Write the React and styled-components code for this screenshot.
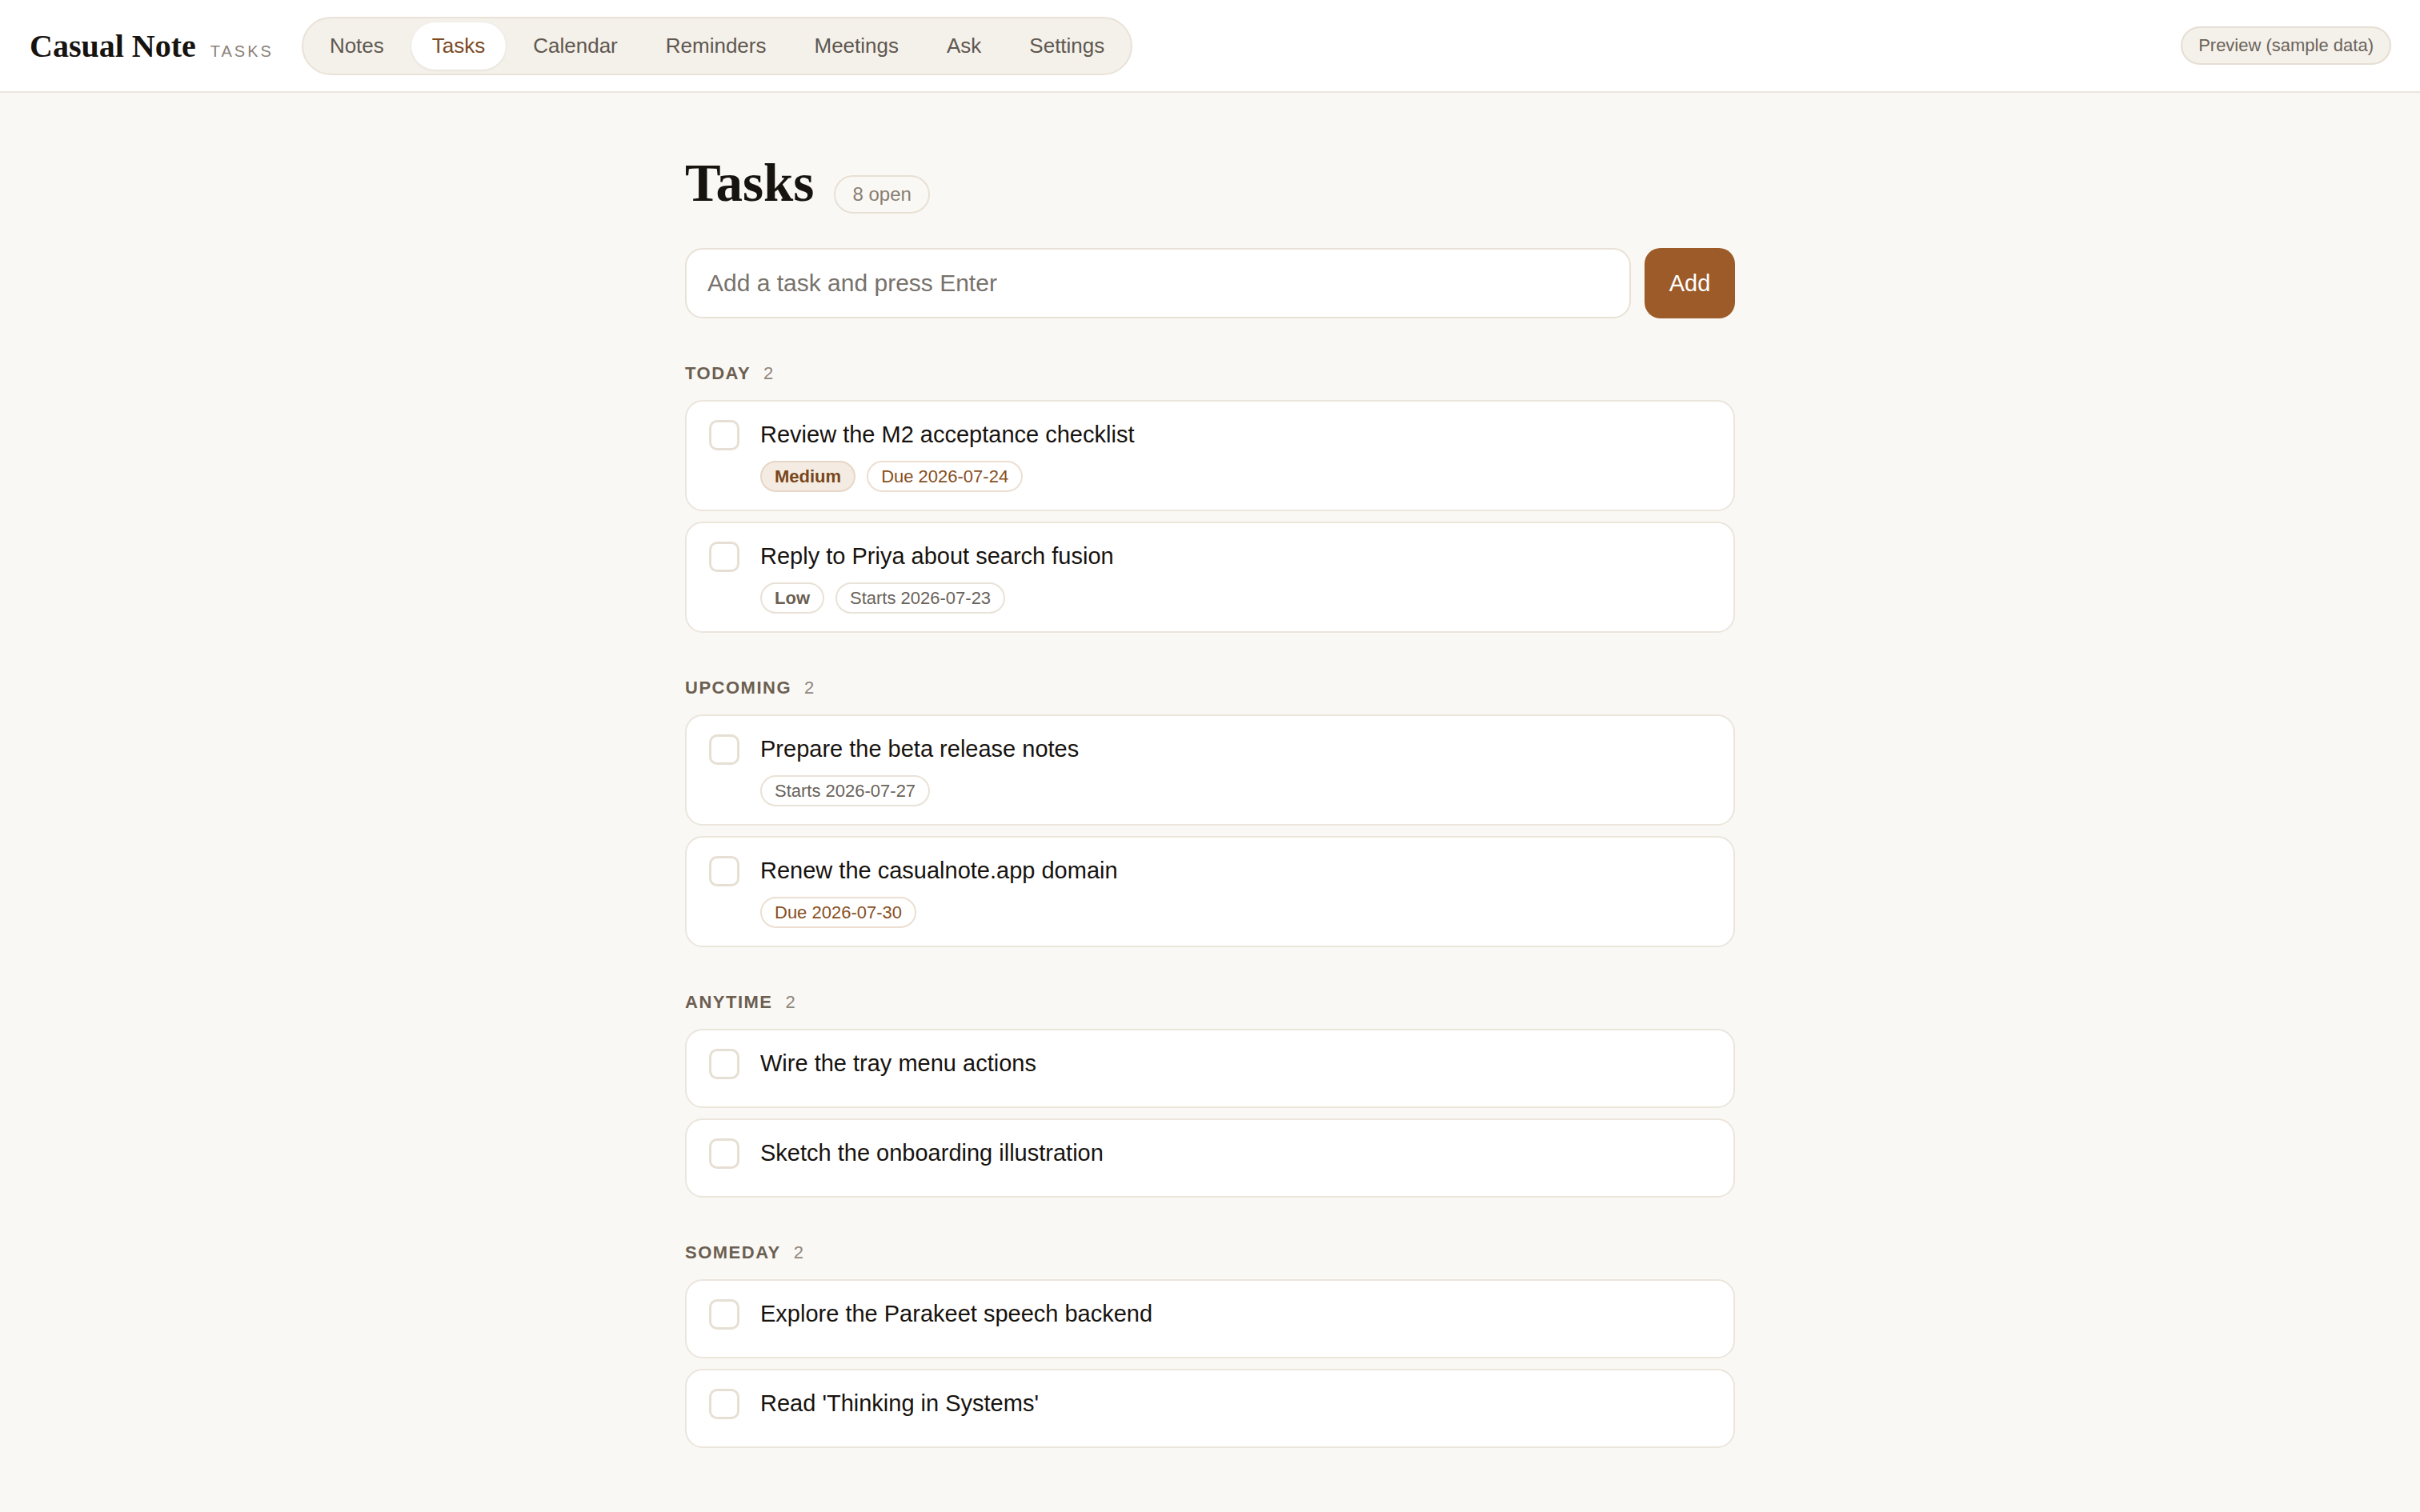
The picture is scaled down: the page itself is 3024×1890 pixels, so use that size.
import styled, { createGlobalStyle } from "styled-components";

const GlobalStyle = createGlobalStyle`
  * { box-sizing: border-box; }
  body {
    margin: 0;
    background: #faf8f4;
    font-family: "Liberation Sans", Arial, sans-serif;
    color: #1c1814;
  }
`;

const navItems = ["Notes", "Tasks", "Calendar", "Reminders", "Meetings", "Ask", "Settings"];

const sections = [
  {
    name: "Today",
    tasks: [
      {
        title: "Review the M2 acceptance checklist",
        tags: [
          { label: "Medium", kind: "medium" },
          { label: "Due 2026-07-24", kind: "due" },
        ],
      },
      {
        title: "Reply to Priya about search fusion",
        tags: [
          { label: "Low", kind: "low" },
          { label: "Starts 2026-07-23", kind: "starts" },
        ],
      },
    ],
  },
  {
    name: "Upcoming",
    tasks: [
      { title: "Prepare the beta release notes", tags: [{ label: "Starts 2026-07-27", kind: "starts" }] },
      { title: "Renew the casualnote.app domain", tags: [{ label: "Due 2026-07-30", kind: "due" }] },
    ],
  },
  {
    name: "Anytime",
    tasks: [
      { title: "Wire the tray menu actions", tags: [] },
      { title: "Sketch the onboarding illustration", tags: [] },
    ],
  },
  {
    name: "Someday",
    tasks: [
      { title: "Explore the Parakeet speech backend", tags: [] },
      { title: "Read 'Thinking in Systems'", tags: [] },
    ],
  },
];

const App = () => {
  return (
    <>
      <GlobalStyle />
      <Header>
        <Brand>
          <Logo>Casual Note</Logo>
          <Section>Tasks</Section>
        </Brand>
        <Nav>
          {navItems.map((item) => (
            <Tab key={item} active={item === "Tasks"}>
              {item}
            </Tab>
          ))}
        </Nav>
        <Spacer />
        <Preview>Preview (sample data)</Preview>
      </Header>

      <Main>
        <TitleRow>
          <Title>Tasks</Title>
          <OpenCount>8 open</OpenCount>
        </TitleRow>

        <AddRow>
          <TaskInput placeholder="Add a task and press Enter" />
          <AddButton>Add</AddButton>
        </AddRow>

        {sections.map((section) => (
          <Group key={section.name}>
            <GroupLabel>
              {section.name}
              <GroupCount>{section.tasks.length}</GroupCount>
            </GroupLabel>
            <List>
              {section.tasks.map((task) => (
                <Card key={task.title}>
                  <Check />
                  <Body>
                    <TaskTitle>{task.title}</TaskTitle>
                    <Meta>
                      {task.tags.map((tag) => (
                        <Tag key={tag.label} kind={tag.kind}>
                          {tag.label}
                        </Tag>
                      ))}
                    </Meta>
                  </Body>
                </Card>
              ))}
            </List>
          </Group>
        ))}
      </Main>
    </>
  );
};

const Header = styled.header`
  height: 116px;
  background: #ffffff;
  border-bottom: 2px solid #ebe5dc;
  display: flex;
  align-items: center;
  padding: 0 36px 0 37px;
`;

const Brand = styled.div`
  display: flex;
  align-items: baseline;
  gap: 18px;
  margin-right: 35px;
`;

const Logo = styled.span`
  font-family: "Liberation Serif", "Times New Roman", serif;
  font-weight: 700;
  font-size: 40px;
  color: #17130f;
`;

const Section = styled.span`
  font-size: 20px;
  letter-spacing: 3px;
  text-transform: uppercase;
  color: #8a8279;
`;

const Nav = styled.nav`
  display: flex;
  gap: 8px;
  padding: 5px 7px;
  background: #f4f0ea;
  border: 2px solid #e9e2d8;
  border-radius: 999px;
`;

const Tab = styled.span`
  height: 59px;
  display: flex;
  align-items: center;
  padding: 0 26px;
  border-radius: 999px;
  font-size: 26px;
  color: ${(p) => (p.active ? "#7b4a1f" : "#5f5850")};
  background: ${(p) => (p.active ? "#ffffff" : "transparent")};
  box-shadow: ${(p) => (p.active ? "0 1px 3px rgba(80, 60, 30, 0.1)" : "none")};
`;

const Spacer = styled.div`
  flex: 1;
`;

const Preview = styled.span`
  height: 48px;
  display: flex;
  align-items: center;
  padding: 0 20px;
  font-size: 22px;
  color: #6b645b;
  background: #f4f0ea;
  border: 2px solid #e6ded2;
  border-radius: 999px;
`;

const Main = styled.main`
  width: 1312px;
  margin: 0 auto;
  padding: 74px 0 80px;
`;

const TitleRow = styled.div`
  display: flex;
  align-items: baseline;
  gap: 25px;
`;

const Title = styled.h1`
  margin: 0;
  font-family: "Liberation Serif", "Times New Roman", serif;
  font-weight: 700;
  font-size: 67px;
  line-height: 77px;
  color: #17130f;
`;

const OpenCount = styled.span`
  height: 48px;
  display: inline-flex;
  align-items: center;
  padding: 0 21px;
  font-size: 24px;
  color: #887e72;
  border: 2px solid #e8e0d5;
  border-radius: 999px;
`;

const AddRow = styled.div`
  display: flex;
  gap: 17px;
  margin-top: 43px;
`;

const TaskInput = styled.input`
  flex: 1;
  height: 88px;
  padding: 0 26px;
  font-family: inherit;
  font-size: 30px;
  color: #1c1814;
  background: #ffffff;
  border: 2px solid #e8e1d6;
  border-radius: 22px;
  outline: none;
  &::placeholder {
    color: #77726c;
  }
`;

const AddButton = styled.button`
  width: 113px;
  height: 88px;
  font-family: inherit;
  font-size: 29px;
  color: #ffffff;
  background: #9c5b28;
  border: none;
  border-radius: 20px;
`;

const Group = styled.section`
  margin-top: 56px;
`;

const GroupLabel = styled.h2`
  margin: 0 0 20px;
  display: flex;
  align-items: baseline;
  gap: 16px;
  font-size: 22px;
  line-height: 26px;
  font-weight: 700;
  letter-spacing: 1.5px;
  text-transform: uppercase;
  color: #6b5f52;
`;

const GroupCount = styled.span`
  font-weight: 400;
  letter-spacing: 0;
  color: #8f867c;
`;

const List = styled.div`
  display: flex;
  flex-direction: column;
  gap: 13px;
`;

const Card = styled.div`
  display: flex;
  align-items: flex-start;
  gap: 26px;
  padding: 22px 28px;
  background: #ffffff;
  border: 2px solid #ebe5dc;
  border-radius: 22px;
`;

const Check = styled.span`
  flex: none;
  width: 38px;
  height: 38px;
  margin-top: 1px;
  border: 3px solid #e6dfd3;
  border-radius: 10px;
  background: #ffffff;
`;

const Body = styled.div`
  display: flex;
  flex-direction: column;
  gap: 12px;
`;

const TaskTitle = styled.div`
  font-size: 29px;
  line-height: 39px;
  color: #17130f;
`;

const tagStyles = {
  medium: { bg: "#f4ece3", border: "#e6d6c6", color: "#7a461b", weight: 700 },
  low: { bg: "#ffffff", border: "#e9e1d6", color: "#6b5f52", weight: 700 },
  due: { bg: "#ffffff", border: "#ecdfd2", color: "#87501f", weight: 400 },
  starts: { bg: "#ffffff", border: "#e9e2d8", color: "#6a635b", weight: 400 },
};

const Meta = styled.div`
  display: flex;
  gap: 14px;
  &:not(:empty) {
    margin-top: 1px;
  }
`;

const Tag = styled.span`
  height: 39px;
  display: inline-flex;
  align-items: center;
  padding: 0 16px;
  font-size: 22px;
  font-weight: ${(p) => tagStyles[p.kind].weight};
  color: ${(p) => tagStyles[p.kind].color};
  background: ${(p) => tagStyles[p.kind].bg};
  border: 2px solid ${(p) => tagStyles[p.kind].border};
  border-radius: 999px;
`;

export default App;
